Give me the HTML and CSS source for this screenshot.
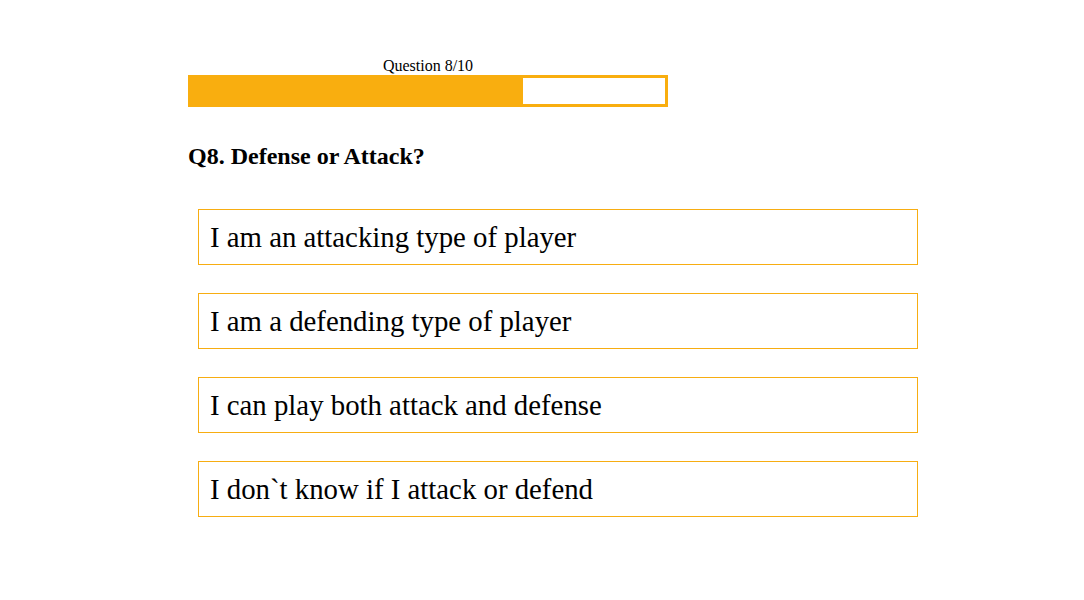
FILE: index.html
```html
<!DOCTYPE html>
<html>
<head>
<meta charset="utf-8">
<link rel="stylesheet" href="styles.css">
</head>
<body>
<div class="quiz">
  <div class="progress">
    <div class="progress-label">Question 8/10</div>
    <div class="progress-bar"><div class="progress-fill" style="width:70%"></div></div>
  </div>
  <h2 class="question">Q8. Defense or Attack?</h2>
  <div class="options">
    <div class="option">I am an attacking type of player</div>
    <div class="option">I am a defending type of player</div>
    <div class="option">I can play both attack and defense</div>
    <div class="option">I don`t know if I attack or defend</div>
  </div>
</div>
</body>
</html>
```
FILE: styles.css
```css
html, body {
  margin: 0;
  padding: 0;
  background: #fff;
}
body {
  font-family: "Liberation Serif", "Times New Roman", serif;
  color: #000;
}
.quiz {
  padding: 57px 0 0 188px;
}
.progress {
  width: 480px;
}
.progress-label {
  text-align: center;
  font-size: 16px;
  line-height: 18px;
}
.progress-bar {
  height: 26px;
  border: 3px solid #f9ae0f;
  background: #fff;
}
.progress-fill {
  height: 100%;
  background: #f9ae0f;
}
.question {
  margin: 35px 0 0 0;
  font-size: 24px;
  line-height: 28px;
  font-weight: bold;
}
.options {
  display: flex;
  flex-direction: column;
  gap: 28px;
  margin: 39px 0 0 10px;
}
.option {
  box-sizing: border-box;
  width: 720px;
  height: 56px;
  border: 1px solid #f7ad12;
  padding: 0 0 0 11px;
  font-size: 28.8px;
  line-height: 54px;
}
```
